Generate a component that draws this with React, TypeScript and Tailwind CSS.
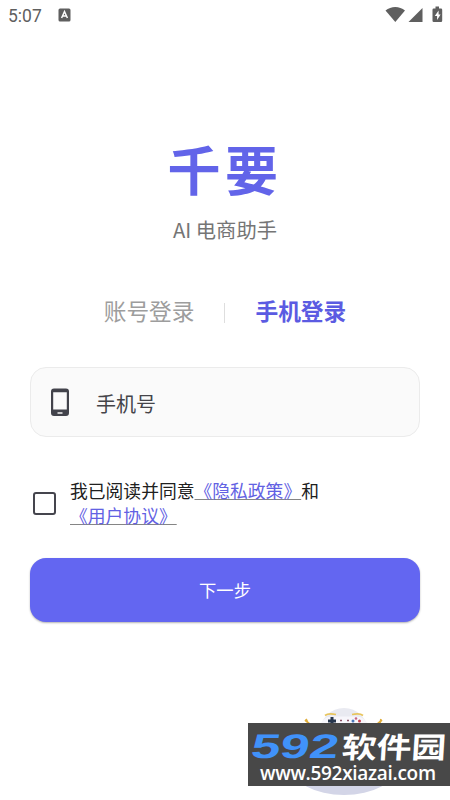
import { useState } from "react"

const font = "font-['Roboto','Noto_Sans_CJK_SC',sans-serif]"
const cjk = "font-['Noto_Sans_CJK_SC',sans-serif]"

function StatusBar() {
    return (
        <header className="flex h-8 items-center justify-between pl-2 pr-[7px] text-[#5f5f5f]">
            <div className="flex items-center gap-4">
                <span className="text-[17.5px] leading-8">5:07</span>
                <svg width="13" height="14" viewBox="0 0 13 14" className="-mt-0.5">
                    <rect x="0.5" y="0.5" width="12" height="13" rx="1.5" fill="currentColor" />
                    <path d="M3.6 10 6.5 3.5 9.4 10M4.7 8h3.6" fill="none" stroke="#fff" strokeWidth="1.5" />
                </svg>
            </div>
            <svg width="58" height="20" viewBox="0 0 58 20" fill="currentColor" className="-mt-0.5">
                <path d="M0.5 5.6C6 0.7 14.5 0.7 20 5.6L10.3 17Z" />
                <path d="M37.5 3V17H23.5Z" />
                <path d="M50.5 1.5h3.5v2h2a1.2 1.2 0 0 1 1.2 1.2v11.1a1.2 1.2 0 0 1-1.2 1.2h-7.3a1.2 1.2 0 0 1-1.2-1.2V4.7a1.2 1.2 0 0 1 1.2-1.2h1.8z" />
                <path d="M53.6 5.5 49.8 11h2.3v4l3.5-5.6h-2z" fill="#fff" />
            </svg>
        </header>
    )
}

function PhoneIcon() {
    return (
        <svg width="20" height="29" viewBox="0 0 20 29">
            <path
                fillRule="evenodd"
                fill="#42434b"
                d="M4 .5h12A3 3 0 0 1 19 3.500v21.500a3 3 0 0 1-3 3H4a3 3 0 0 1-3-3V3.500A3 3 0 0 1 4 .5ZM3.200 4.300v17.200h13.600V4.300Z"
            />
            <path d="M7.500 25h5" stroke="#fff" strokeWidth="1.400" />
        </svg>
    )
}

function Mascot() {
    return (
        <svg width="100" height="92" viewBox="0 0 100 92">
            <ellipse cx="50" cy="61" rx="53" ry="29" fill="#d3d5e7" />
            <path d="M0 0H100V60H0Z" fill="#fff" />
            <circle cx="50" cy="27" r="24" fill="#e9eaf1" />
            <path d="M26 22Q27 12 38 11.500H62Q73 12 74 22Z" fill="#f7f6fb" />
            <path d="M31 10.500Q34 8 42 9.500M58 9.500Q66 8 69 10.500" fill="none" stroke="#e8c55d" strokeWidth="1.700" />
            <path d="M38 12v8M34 16h8" stroke="#26364d" strokeWidth="3" />
            <path d="M46 15.500h2M53 15.500h2" stroke="#8c5366" strokeWidth="1.300" />
            <circle cx="62" cy="13.500" r="1.300" fill="#c66483" />
            <circle cx="65.500" cy="16" r="1.500" fill="#c53f4e" />
            <circle cx="59" cy="16" r="1.500" fill="#4977ba" />
            <path d="m12 14 2 4M11 15l7 6M87 14l-1 4M88 15l-7 6" fill="none" stroke="#dfad3b" strokeWidth="1.700" />
        </svg>
    )
}

function Watermark() {
    return (
        <div className="absolute left-[248px] top-[723px] h-[63px] w-[202px] bg-[#484848]">
            <div className="flex h-[39px] items-center pl-1 pt-[5px]">
                <span className="w-[90px] shrink-0">
                    <span className="inline-block origin-left -skew-x-6 scale-x-[1.54] pt-1 font-['Liberation_Sans',sans-serif] text-[34px] font-bold leading-[32px] text-[#4092fa]">592</span>
                </span>
                <span className={`${cjk} inline-block origin-left -skew-x-3 scale-x-[1.2] whitespace-nowrap text-[29px] font-bold leading-[32px] text-white`}>软件园</span>
            </div>
            <div className="-mt-px pl-3 font-['Open_Sans','Noto_Sans',sans-serif] text-[19px] font-semibold leading-[24px] tracking-[-0.3px] text-white">
                www.592xiazai.com
            </div>
        </div>
    )
}

export default function App() {
    const [tab, setTab] = useState("phone")
    const [agreed, setAgreed] = useState(false)

    const tabClass = (active: boolean) =>
        `text-[22.7px] leading-8 ${active ? "font-bold text-[#5b5be2]" : "text-[#9d9d9d]"}`

    return (
        <div className={`relative flex h-[800px] w-[450px] flex-col overflow-hidden bg-white ${font}`}>
            <StatusBar />

            <main className="flex flex-col px-[30px]">
                <h1 className={`${cjk} mt-[96px] text-center text-[53px] font-bold leading-[80px] tracking-[4.5px] text-[#6264e9]`}>
                    千要
                </h1>
                <p className={`${cjk} mt-[6px] text-center text-[20.3px] leading-[30px] text-[#757575]`}>AI 电商助手</p>

                <div className="mt-[53px] flex h-8 items-center justify-center">
                    <button type="button" className={tabClass(tab === "account")} onClick={() => setTab("account")}>
                        账号登录
                    </button>
                    <span className="ml-[29px] mr-[31px] h-5 w-px bg-[#dedede]" />
                    <button type="button" className={tabClass(tab === "phone")} onClick={() => setTab("phone")}>
                        手机登录
                    </button>
                </div>

                <label className="mt-[38px] flex h-[70px] items-center rounded-2xl border border-[#ebebeb] bg-[#fafafa] pl-[19px]">
                    <PhoneIcon />
                    <input
                        type="tel"
                        placeholder="手机号"
                        className="ml-[26px] w-[250px] bg-transparent pt-1.5 text-[20px] text-[#444] outline-none placeholder:text-[#444449]"
                    />
                </label>

                <div className="mt-[41px] flex h-[50px] items-center pl-[3px]">
                    <button
                        type="button"
                        role="checkbox"
                        aria-checked={agreed}
                        aria-label="同意"
                        onClick={() => setAgreed(!agreed)}
                        className={`mr-[14px] size-[23px] shrink-0 rounded-[3px] border-2 border-[#45454d] ${agreed ? "bg-[#6366f1]" : ""}`}
                    />
                    <p className="mt-0.5 text-[17.8px] leading-[25px] text-[#202020]">
                        我已阅读并同意
                        <a className="text-[#6261e3] underline decoration-[#858585] decoration-1 underline-offset-[1px] [text-decoration-skip-ink:none]">《隐私政策》</a>
                        和<br />
                        <a className="text-[#6261e3] underline decoration-[#858585] decoration-1 underline-offset-[1px] [text-decoration-skip-ink:none]">《用户协议》</a>
                    </p>
                </div>

                <button
                    type="button"
                    className="mt-[30px] h-[64px] rounded-2xl bg-[#6366f1] pt-[3px] text-[17.3px] text-white shadow-[0_1px_2px_rgba(0,0,0,0.3)]"
                >
                    下一步
                </button>
            </main>

            <div className="absolute left-[294px] top-[705px]">
                <Mascot />
            </div>
            <Watermark />
        </div>
    )
}
